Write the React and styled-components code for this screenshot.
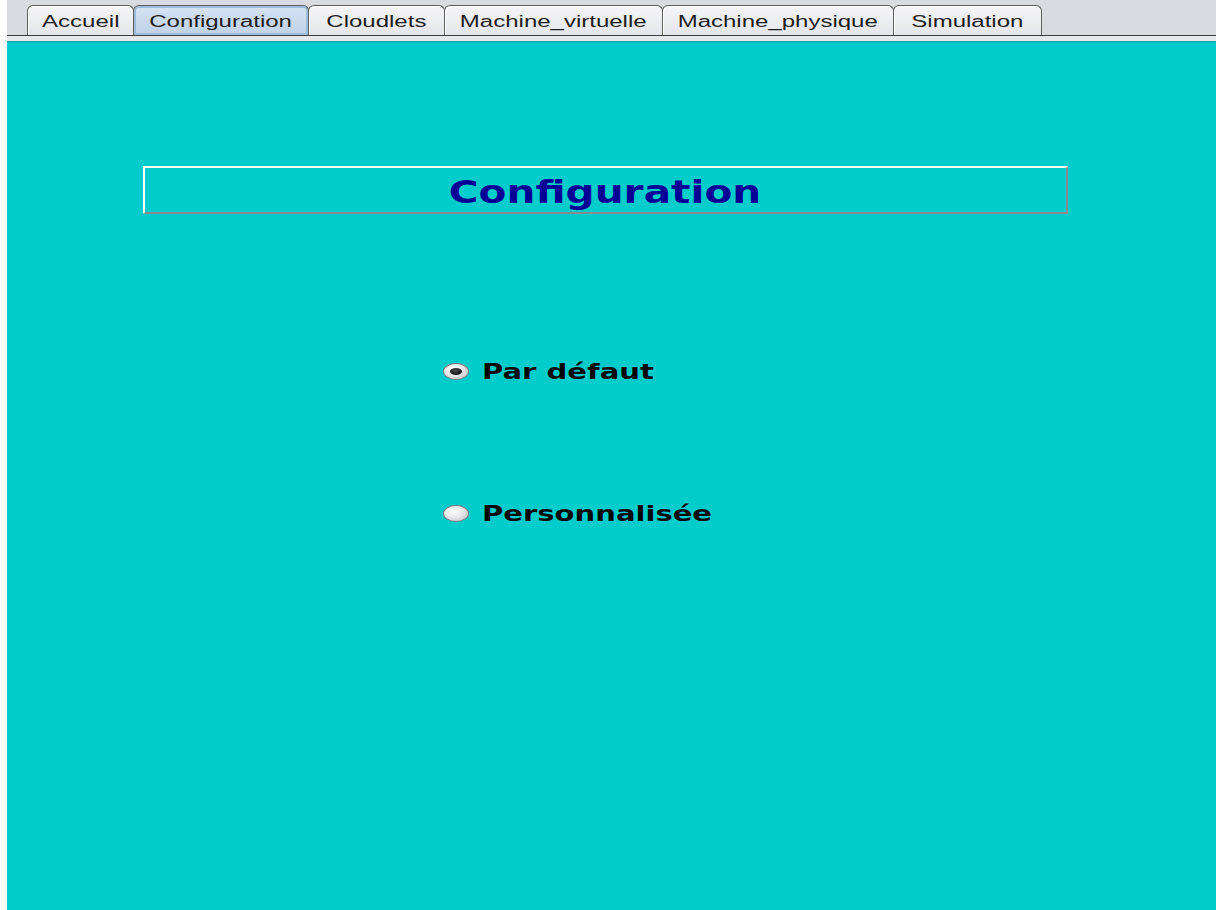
import styled, { createGlobalStyle } from 'styled-components';

const GlobalStyle = createGlobalStyle`
  html, body {
    margin: 0;
    padding: 0;
    background: #ffffff;
  }
  #root {
    height: 910px;
  }
`;

const Frame = styled.div`
  height: 910px;
  padding-left: 7px;
  display: flex;
  flex-direction: column;
  box-sizing: border-box;
`;

const TabStrip = styled.div`
  height: 36px;
  background: #d9dbe0;
  border-bottom: 1px solid #3d3d3d;
  padding-left: 20px;
  display: flex;
  align-items: flex-end;
  box-sizing: border-box;
`;

const TabGap = styled.div`
  height: 5px;
  background: #e5e7eb;
`;

const Tab = styled.div`
  width: ${p => p.$w}px;
  height: 30px;
  box-sizing: border-box;
  border: 1px solid #5e5e5e;
  border-bottom: none;
  border-radius: 6px 6px 0 0;
  margin-right: -1px;
  padding-top: 2px;
  display: flex;
  align-items: center;
  justify-content: center;
  font-family: "Liberation Sans", Arial, sans-serif;
  font-size: 16px;
  color: #1e1e1e;
  background: ${p => (p.$active
    ? 'linear-gradient(#d6e3f1, #bfd2e8)'
    : 'linear-gradient(#f6f6f8, #e4e5ea)')};
  box-shadow: ${p => (p.$active ? 'inset 0 0 0 2px #9dbbdd' : 'inset 1px 1px 0 #ffffff')};
`;

const Stretch = styled.span`
  display: inline-block;
  white-space: nowrap;
  transform: scaleX(${p => p.$x});
  transform-origin: ${p => p.$origin || 'center'};
`;

const Panel = styled.div`
  flex: 1;
  background: #00cccc;
  border-top: 1px solid #0a9da0;
  display: flex;
  flex-direction: column;
`;

const TitleBox = styled.div`
  margin: 124px 0 0 136px;
  width: 925px;
  height: 48px;
  box-sizing: border-box;
  border-top: 2px solid #ffffff;
  border-left: 2px solid #ffffff;
  border-bottom: 2px solid #8a8a8a;
  border-right: 2px solid #8a8a8a;
  padding-top: 4px;
  display: flex;
  align-items: center;
  justify-content: center;
  font-family: "DejaVu Sans", Verdana, sans-serif;
  font-weight: bold;
  font-size: 32px;
  color: #000096;
`;

const Options = styled.div`
  margin: 142px 0 0 436px;
  display: flex;
  flex-direction: column;
  gap: 112px;
`;

const RadioRow = styled.label`
  height: 30px;
  display: flex;
  align-items: center;
  gap: 13px;
  font-family: "DejaVu Sans", Verdana, sans-serif;
  font-weight: bold;
  font-size: 22px;
  color: #050505;
`;

const RadioLabel = styled(Stretch)`
  padding-top: 1px;
`;

const RadioDot = styled.span`
  width: 26px;
  height: 17px;
  box-sizing: border-box;
  border-radius: 50%;
  border: 1px solid #7a7a7a;
  background: radial-gradient(ellipse at 40% 30%, #ffffff 0%, #e8e8ea 45%, #b9babd 100%);
  display: flex;
  align-items: center;
  justify-content: center;
  flex-shrink: 0;

  &::after {
    content: '';
    display: ${p => (p.$checked ? 'block' : 'none')};
    width: 12px;
    height: 7px;
    border-radius: 50%;
    background: radial-gradient(ellipse at 45% 35%, #4a4a4a 0%, #0a0a0a 80%);
  }
`;

const tabs = [
  { label: 'Accueil', w: 107 },
  { label: 'Configuration', w: 176, active: true },
  { label: 'Cloudlets', w: 137 },
  { label: 'Machine_virtuelle', w: 219 },
  { label: 'Machine_physique', w: 232 },
  { label: 'Simulation', w: 149 },
];

const options = [
  { label: 'Par défaut', checked: true },
  { label: 'Personnalisée', checked: false },
];

export default function App() {
  return (
    <>
      <GlobalStyle />
      <Frame>
        <TabStrip>
          {tabs.map(t => (
            <Tab key={t.label} $w={t.w} $active={t.active}>
              <Stretch $x={1.5}>{t.label}</Stretch>
            </Tab>
          ))}
        </TabStrip>
        <TabGap />
        <Panel>
          <TitleBox>
            <Stretch $x={1.27}>Configuration</Stretch>
          </TitleBox>
          <Options>
            {options.map(o => (
              <RadioRow key={o.label}>
                <RadioDot $checked={o.checked} />
                <RadioLabel $x={1.32} $origin="left">{o.label}</RadioLabel>
              </RadioRow>
            ))}
          </Options>
        </Panel>
      </Frame>
    </>
  );
}
